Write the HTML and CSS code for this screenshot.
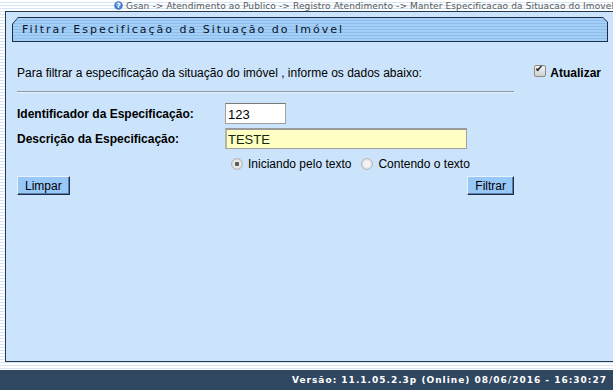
FILE: index.html
```html
<!DOCTYPE html>
<html lang="pt-BR">
<head>
    <meta charset="UTF-8">
    <title>Filtrar Especificação da Situação do Imóvel</title>
    <link rel="stylesheet" href="styles.css">
</head>
<body>
    <div class="breadcrumb">
        <svg class="help-icon" width="9" height="9" viewBox="0 0 9 9">
            <circle cx="4.5" cy="4.5" r="4.3" fill="#3d7cc9"/>
            <circle cx="4.5" cy="3.6" r="2.6" fill="#8dbbee" opacity="0.6"/>
            <text x="4.5" y="7.4" font-size="7" font-weight="bold" fill="#fff" text-anchor="middle" font-family="DejaVu Sans, sans-serif">?</text>
        </svg>
        <span>Gsan -&gt; Atendimento ao Publico -&gt; Registro Atendimento -&gt; Manter Especificacao da Situacao do Imovel</span>
    </div>

    <div class="panel">
        <div class="tab">
            <div class="tab-inner">Filtrar Especificação da Situação do Imóvel</div>
        </div>

        <div class="content">
            <div class="intro">
                <span>Para filtrar a especificação da situação do imóvel , informe os dados abaixo:</span>
                <label class="refresh"><input type="checkbox" class="check" checked> Atualizar</label>
            </div>
            <div class="divider"></div>

            <div class="form-grid">
                <label for="codigo">Identificador da Especificação:</label>
                <div><input id="codigo" class="field field-id" type="text" value="123"></div>

                <label for="descricao">Descrição da Especificação:</label>
                <div><input id="descricao" class="field field-desc" type="text" value="TESTE"></div>

                <span></span>
                <div class="options">
                    <label><input type="radio" name="tipo" class="radio" checked> Iniciando pelo texto</label>
                    <label><input type="radio" name="tipo" class="radio"> Contendo o texto</label>
                </div>
            </div>

            <div class="actions">
                <button class="btn">Limpar</button>
                <button class="btn">Filtrar</button>
            </div>
        </div>
    </div>

    <div class="footer">Versão: 11.1.05.2.3p (Online) 08/06/2016 - 16:30:27</div>
</body>
</html>
```

FILE: styles.css
```css
body {
    margin: 0;
    padding: 0;
    width: 613px;
    height: 390px;
    overflow: hidden;
    font-family: "Liberation Sans", Arial, sans-serif;
    font-size: 12px;
    color: #000;
    background: repeating-linear-gradient(#ffffff 0 2px, #d6e6f6 2px 3px);
}
.breadcrumb {
    height: 11px;
    display: flex;
    justify-content: flex-end;
    align-items: center;
    gap: 3px;
    white-space: nowrap;
    font-family: "DejaVu Sans", Verdana, sans-serif;
    font-size: 9px;
    letter-spacing: 0.12px;
    color: #5a5a5a;
    line-height: 10px;
    margin-right: -1px;
}
.help-icon {
    flex: none;
}
.panel {
    margin-left: 5px;
    width: 620px;
    height: 351px;
    box-sizing: border-box;
    border: 1px solid #243850;
    background-color: #cce4fb;
}
.tab {
    margin: 5px 0 0 6px;
    width: 596px;
    padding: 1px;
    box-sizing: border-box;
    background-color: #1b2d48;
    clip-path: polygon(6px 0, calc(100% - 5px) 0, 100% 5px, 100% 100%, 0 100%, 0 7px);
}
.tab-inner {
    height: 23px;
    line-height: 23px;
    padding-left: 9px;
    font-family: "DejaVu Sans", Verdana, sans-serif;
    font-size: 11px;
    letter-spacing: 2px;
    color: #0a1428;
    background: repeating-linear-gradient(#a4cff7 0 2px, #8cbdec 2px 3px);
    clip-path: polygon(5px 0, calc(100% - 4px) 0, 100% 4px, 100% 100%, 0 100%, 0 6px);
}
.content {
    padding: 19px 0 0 11px;
}
.intro {
    width: 584px;
    display: flex;
    justify-content: space-between;
    align-items: center;
    height: 24px;
}
.refresh {
    display: flex;
    align-items: center;
    gap: 4px;
    font-weight: bold;
}
.check {
    appearance: none;
    margin: 0;
    width: 12px;
    height: 12px;
    border: 1px solid #8a8a8a;
    border-radius: 2px;
    box-sizing: border-box;
    background: linear-gradient(#f4f4f4, #cfcfcf);
    position: relative;
    top: -2px;
}
.check:checked::after {
    content: "\2714";
    position: absolute;
    left: 0px;
    top: -3px;
    font-size: 10px;
    color: #222;
}
.divider {
    width: 497px;
    height: 1px;
    margin-top: 6px;
    background-color: #8e9aa6;
    border-bottom: 1px solid #e4f0fc;
}
.form-grid {
    display: grid;
    grid-template-columns: 208px auto;
    row-gap: 4px;
    align-items: center;
    margin-top: 10px;
}
.form-grid label {
    font-weight: bold;
}
.field {
    box-sizing: border-box;
    height: 21px;
    margin: 0;
    padding: 1px 2px 0;
    font-family: "Liberation Sans", Arial, sans-serif;
    font-size: 13px;
    border: 1px solid #a0a0a0;
    border-top-color: #7a7a7a;
    outline: none;
}
.field-id {
    width: 61px;
    background-color: #fff;
}
.field-desc {
    width: 242px;
    background-color: #ffffc4;
    color: #10280f;
    border-top: 2px solid #9a9a9a;
    border-left: 2px solid #b4b4a0;
    padding-left: 1px;
}
.options {
    display: flex;
    gap: 10px;
    padding-left: 6px;
    height: 22px;
    align-items: center;
}
.options label {
    font-weight: normal;
    display: flex;
    align-items: center;
    gap: 5px;
}
.radio {
    appearance: none;
    margin: 0;
    width: 12px;
    height: 12px;
    border-radius: 50%;
    border: 1px solid #b8b8b8;
    box-sizing: border-box;
    background: radial-gradient(circle, #f2f2f2 0 3px, #dcdcdc 5px);
}
.radio:checked {
    background: radial-gradient(circle, #5a5a5a 0 2px, #e6e6e6 2.5px 4px, #d0d0d0 5px);
}
.actions {
    width: 497px;
    display: flex;
    justify-content: space-between;
    margin-top: 1px;
}
.btn {
    height: 19px;
    padding: 0 7px;
    font-family: "Liberation Sans", Arial, sans-serif;
    font-size: 12px;
    color: #000;
    background-color: #98c8f8;
    border: 1px solid #1e2e48;
    border-top-color: #e8f2fc;
    border-left-color: #e8f2fc;
    box-shadow: inset -1px -1px 0 #5a7ea6;
    cursor: pointer;
}
.footer {
    margin-top: 8px;
    height: 20px;
    line-height: 20px;
    text-align: right;
    padding-right: 6px;
    background-color: #2f4760;
    color: #fff;
    font-family: "DejaVu Sans", Verdana, sans-serif;
    font-size: 9px;
    font-weight: bold;
    letter-spacing: 1px;
}
```
